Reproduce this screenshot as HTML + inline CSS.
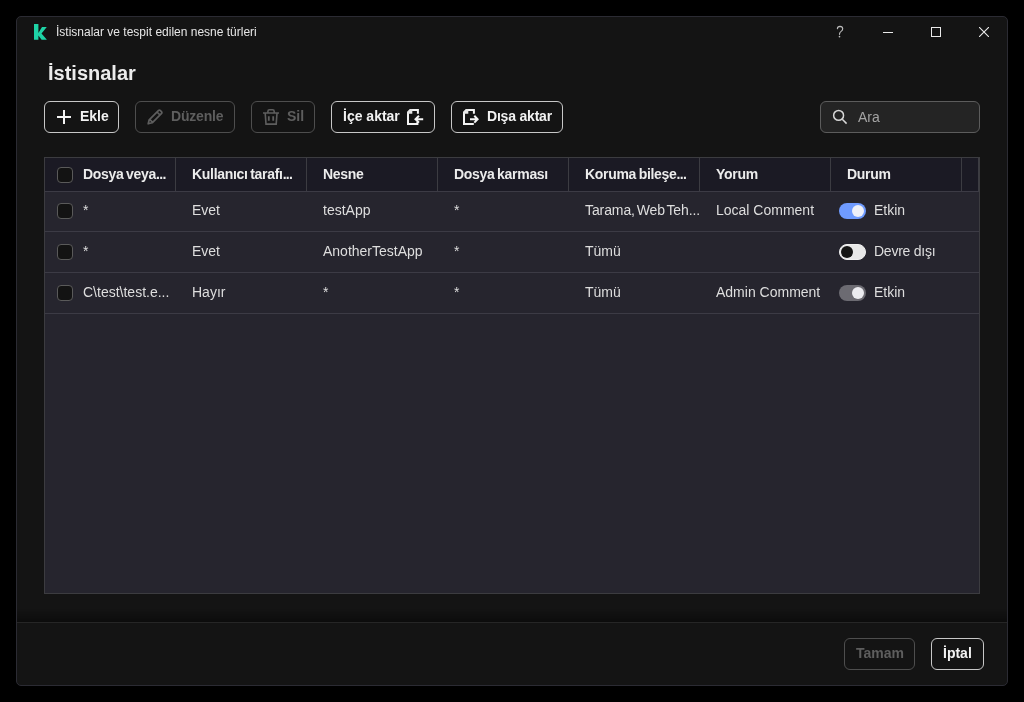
<!DOCTYPE html>
<html><head><meta charset="utf-8">
<style>
*{box-sizing:border-box;margin:0;padding:0}
html,body{width:1024px;height:702px;background:#000;overflow:hidden;font-family:"Liberation Sans",sans-serif;color:#e8e8e8}
.a{position:absolute;white-space:nowrap}
.a,.bt,.hc,.c{will-change:transform}
.win{position:absolute;left:16px;top:16px;width:992px;height:670px;background:#141414;border:1px solid #2b2b33;border-radius:5px}
.title{left:56px;top:25px;font-size:12px;color:#e6e6e6}
.h1{left:48px;top:62px;font-size:20px;font-weight:bold;color:#ececec}
.btn{position:absolute;top:101px;height:32px;border:1px solid #c8c8c8;border-radius:6px;background:#141414}
.bt{position:absolute;font-size:14px;font-weight:bold;color:#f2f2f2;white-space:nowrap;top:108px}
.dis{border-color:#4e4e4e}
.dt{color:#5e5e5e}
.search{position:absolute;left:820px;top:101px;width:160px;height:32px;background:#242424;border:1px solid #5c5c5c;border-radius:6px}
.table{position:absolute;left:44px;top:157px;width:936px;height:437px;background:#26252e;border:1px solid #3c3c40}
.hdr{position:absolute;left:45px;top:158px;width:934px;height:33px;background:#1b1a24}
.hl{position:absolute;left:45px;width:934px;height:1px;background:#3c3b45}
.vd{position:absolute;top:158px;width:1px;height:33px;background:#3c3c42}
.hc{position:absolute;top:166px;font-size:14px;font-weight:bold;white-space:nowrap;color:#ececec;letter-spacing:-0.3px;word-spacing:-1px}
.hc .dots{letter-spacing:-0.7px}
.c{position:absolute;font-size:14px;white-space:nowrap;color:#dedede}
.cb{position:absolute;left:57px;width:16px;height:16px;border:1px solid #5a5a5a;border-radius:4px;background:#131313}
.tg{position:absolute;left:839px;width:27px;height:16px;border-radius:8px}
.kn{position:absolute;width:12px;height:12px;border-radius:6px;top:2px}
</style></head><body>
<div class="win"></div>
<!-- logo -->
<svg class="a" style="left:34px;top:24px" width="13" height="16" viewBox="0 0 13 16"><path d="M0 0H4.4V15.8H0Z M4.4 9L8 3H12.8L7.5 9.6L12.9 15.8H7.6L4.4 11.5Z" fill="#1ed3a6"/></svg>
<div class="a title">İstisnalar ve tespit edilen nesne türleri</div>
<!-- window controls -->
<svg class="a" style="left:833px;top:23px" width="15" height="17" viewBox="0 0 15 17"><path d="M4.4 5.6Q4.5 3.4 7 3.4Q9.6 3.5 9.7 5.8Q9.7 7.3 8.1 8.4Q6.5 9.5 6.5 11.3" fill="none" stroke="#bcbcbc" stroke-width="1.15" stroke-linecap="round"/><circle cx="6.5" cy="13.6" r="0.85" fill="#bcbcbc"/></svg>
<div class="a" style="left:883px;top:32px;width:10px;height:1px;background:#eaeaea"></div>
<div class="a" style="left:931px;top:27px;width:10px;height:10px;border:1px solid #eaeaea"></div>
<svg class="a" style="left:979px;top:27px" width="10" height="10" viewBox="0 0 10 10"><path d="M0 0L10 10M10 0L0 10" stroke="#eaeaea" stroke-width="1.1"/></svg>

<div class="a h1">İstisnalar</div>

<!-- toolbar -->
<div class="btn" style="left:44px;width:75px"></div>
<svg class="a" style="left:57px;top:110px" width="14" height="14" viewBox="0 0 14 14"><path d="M7 0V14M0 7H14" stroke="#f2f2f2" stroke-width="2"/></svg>
<div class="bt" style="left:80px">Ekle</div>

<div class="btn dis" style="left:135px;width:100px"></div>
<svg class="a" style="left:147px;top:109px" width="16" height="16" viewBox="0 0 16 16"><path d="M1.2 14.8 L2.2 10.8 L11.6 1.4 Q12.4 0.8 13.2 1.4 L14.6 2.8 Q15.2 3.6 14.6 4.4 L5.2 13.8 Z M10 3 L13 6 M2.3 10 L6 13.7" fill="none" stroke="#5e5e5e" stroke-width="1.7" stroke-linejoin="round"/></svg>
<div class="bt dt" style="left:171px;letter-spacing:-0.2px">Düzenle</div>

<div class="btn dis" style="left:251px;width:64px"></div>
<svg class="a" style="left:263px;top:109px" width="17" height="16" viewBox="0 0 17 16"><path d="M0 4H16 M4.9 3.5V2.4Q4.9 0.8 6.5 0.8H9.6Q11.2 0.8 11.2 2.4V3.5 M2.2 4.2L3 15.1H13.2L14 4.2" fill="none" stroke="#5e5e5e" stroke-width="1.6"/><path d="M5.8 7.2V11.7 M10.2 7.2V11.7" stroke="#5e5e5e" stroke-width="1.8"/></svg>
<div class="bt dt" style="left:287px">Sil</div>

<div class="btn" style="left:331px;width:104px"></div>
<div class="bt" style="left:343px">İçe aktar</div>
<svg class="a" style="left:406px;top:108px" width="18" height="18" viewBox="0 0 18 18"><path d="M11.9 5.7V2H4.3L2 4.3V16H11.4V13.8" fill="none" stroke="#f4f4f4" stroke-width="2"/><path d="M1 4.3L4.3 1H6.3V5.7H1Z" fill="#e6e6e6"/><path d="M17.2 11.2H9.5 M13 7.8L9.5 11.2L13 14.6" fill="none" stroke="#f4f4f4" stroke-width="2"/></svg>

<div class="btn" style="left:451px;width:112px"></div>
<svg class="a" style="left:462px;top:108px" width="18" height="18" viewBox="0 0 18 18"><path d="M11.9 5.7V2H4.3L2 4.3V16H11.8" fill="none" stroke="#f4f4f4" stroke-width="2"/><path d="M1 4.3L4.3 1H6.3V5.7H1Z" fill="#e6e6e6"/><path d="M8 11.2H15.4 M12.3 7.8L15.6 11.2L12.3 14.6" fill="none" stroke="#f4f4f4" stroke-width="2"/></svg>
<div class="bt" style="left:487px;letter-spacing:-0.2px">Dışa aktar</div>

<!-- search -->
<div class="search"></div>
<svg class="a" style="left:832px;top:109px" width="16" height="16" viewBox="0 0 16 16"><circle cx="6.6" cy="6.4" r="4.95" fill="none" stroke="#d8d8d8" stroke-width="1.5"/><path d="M10.3 10.3L14.6 14.6" stroke="#d8d8d8" stroke-width="1.5"/></svg>
<div class="a" style="left:858px;top:109px;font-size:14px;color:#a4a4a4">Ara</div>

<!-- table -->
<div class="table"></div>
<div class="hdr"></div>
<div class="hl" style="top:191px"></div>
<div class="hl" style="top:231px"></div>
<div class="hl" style="top:272px"></div>
<div class="hl" style="top:313px"></div>
<div class="vd" style="left:175px"></div>
<div class="vd" style="left:306px"></div>
<div class="vd" style="left:437px"></div>
<div class="vd" style="left:568px"></div>
<div class="vd" style="left:699px"></div>
<div class="vd" style="left:830px"></div>
<div class="vd" style="left:961px"></div>
<div class="vd" style="left:978px"></div>

<div class="cb" style="top:167px"></div>
<div class="hc" style="left:83px">Dosya veya<span class="dots">...</span></div>
<div class="hc" style="left:192px">Kullanıcı tarafı<span class="dots">...</span></div>
<div class="hc" style="left:323px">Nesne</div>
<div class="hc" style="left:454px">Dosya karması</div>
<div class="hc" style="left:585px">Koruma bileşe<span class="dots">...</span></div>
<div class="hc" style="left:716px">Yorum</div>
<div class="hc" style="left:847px">Durum</div>

<!-- row 1 -->
<div class="cb" style="top:203px"></div>
<div class="c" style="left:83px;top:202px">*</div>
<div class="c" style="left:192px;top:202px">Evet</div>
<div class="c" style="left:323px;top:202px">testApp</div>
<div class="c" style="left:454px;top:202px">*</div>
<div class="c" style="left:585px;top:202px;word-spacing:-2px;letter-spacing:-0.1px">Tarama, Web Teh<span class="dots">...</span></div>
<div class="c" style="left:716px;top:202px">Local Comment</div>
<div class="tg" style="top:203px;background:#6f9bff"><div class="kn" style="left:13px;background:#eef0f8"></div></div>
<div class="c" style="left:874px;top:202px">Etkin</div>

<!-- row 2 -->
<div class="cb" style="top:244px"></div>
<div class="c" style="left:83px;top:243px">*</div>
<div class="c" style="left:192px;top:243px">Evet</div>
<div class="c" style="left:323px;top:243px">AnotherTestApp</div>
<div class="c" style="left:454px;top:243px">*</div>
<div class="c" style="left:585px;top:243px">Tümü</div>
<div class="tg" style="top:244px;background:#e8e8e8;border:1px solid #f0f0f0"><div class="kn" style="left:1px;top:1px;background:#151515"></div></div>
<div class="c" style="left:874px;top:243px;letter-spacing:-0.25px">Devre dışı</div>

<!-- row 3 -->
<div class="cb" style="top:285px"></div>
<div class="c" style="left:83px;top:284px">C\test\test.e<span class="dots">...</span></div>
<div class="c" style="left:192px;top:284px">Hayır</div>
<div class="c" style="left:323px;top:284px">*</div>
<div class="c" style="left:454px;top:284px">*</div>
<div class="c" style="left:585px;top:284px">Tümü</div>
<div class="c" style="left:716px;top:284px">Admin Comment</div>
<div class="tg" style="top:285px;background:#6c6b72"><div class="kn" style="left:13px;background:#ececf0"></div></div>
<div class="c" style="left:874px;top:284px">Etkin</div>

<!-- footer -->
<div class="a" style="left:17px;top:609px;width:990px;height:13px;background:linear-gradient(rgba(0,0,0,0),rgba(0,0,0,0.38))"></div>
<div class="a" style="left:17px;top:622px;width:990px;height:1px;background:#262626"></div>
<div class="btn dis" style="left:844px;top:638px;width:71px"></div>
<div class="bt dt" style="left:856px;top:645px">Tamam</div>
<div class="btn" style="left:931px;top:638px;width:53px"></div>
<div class="bt" style="left:943px;top:645px">İptal</div>
</body></html>
